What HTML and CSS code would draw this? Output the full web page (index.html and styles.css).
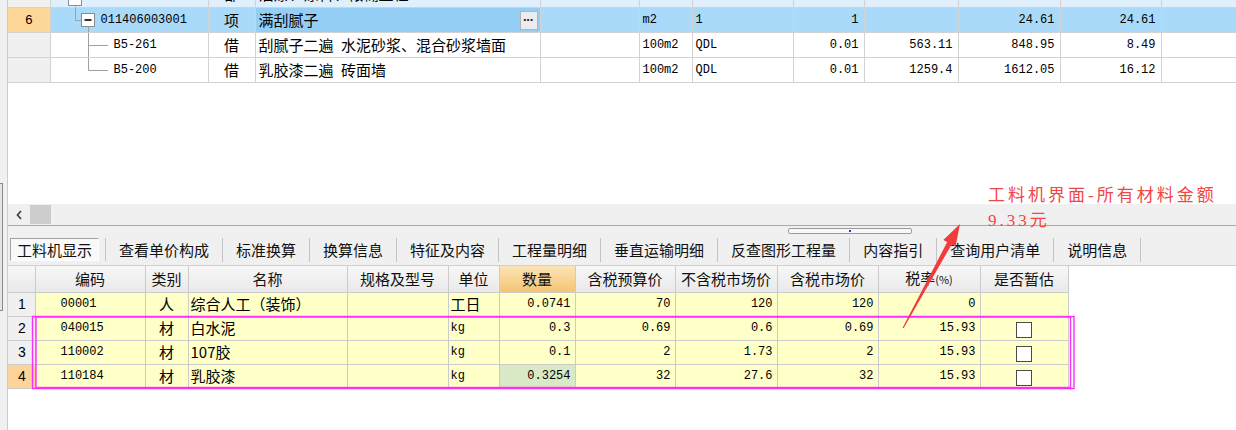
FILE: index.html
```html
<!DOCTYPE html>
<html lang="zh">
<head>
<meta charset="utf-8">
<title>工料机显示</title>
<link rel="stylesheet" href="styles.css">
</head>
<body>
<div class="app">
  <div class="side"><div class="side-grip"></div></div>
  <div class="main">
    <div class="top-grid">
      <table class="grid1">
        <colgroup>
          <col style="width:42px"><col style="width:158px"><col style="width:47px"><col style="width:285px">
          <col style="width:99px"><col style="width:53px"><col style="width:101px"><col style="width:71px">
          <col style="width:94px"><col style="width:102px"><col style="width:101px"><col style="width:75px">
        </colgroup>
        <tr class="r-parent">
          <td class="rn"></td>
          <td class="code"><div class="tree"><svg width="37" height="24" viewBox="0 0 37 24"><rect x="17.5" y="9.5" width="13" height="13" fill="#fff" stroke="#8c8c8c"/><line x1="24.5" y1="22.5" x2="24.5" y2="24" stroke="#a0a0a0"/></svg><span class="m">011406</span></div></td>
          <td class="c">部</td>
          <td>油漆、涂料、裱糊工程</td>
          <td></td><td></td><td></td><td></td><td></td><td></td><td></td><td></td>
        </tr>
        <tr class="r-sel">
          <td class="rn sel">6</td>
          <td class="code"><div class="tree"><svg width="50" height="24" viewBox="0 0 50 24"><line x1="24.5" y1="0" x2="24.5" y2="12.5" stroke="#a0a0a0"/><line x1="24.5" y1="12.5" x2="30" y2="12.5" stroke="#a0a0a0"/><rect x="30.5" y="5.5" width="13" height="13" fill="#fff" stroke="#8c8c8c"/><line x1="33.5" y1="12" x2="40.5" y2="12" stroke="#000" stroke-width="1.6"/><line x1="37.5" y1="18.5" x2="37.5" y2="24" stroke="#a0a0a0"/></svg><span class="m">011406003001</span></div></td>
          <td class="c">项</td>
          <td class="focus"><div class="namecell"><span>满刮腻子</span><span class="ell">···</span></div></td>
          <td></td>
          <td class="m">m2</td>
          <td class="m">1</td>
          <td class="m n">1</td>
          <td></td>
          <td class="m n">24.61</td>
          <td class="m n">24.61</td>
          <td></td>
        </tr>
        <tr class="r-sub">
          <td class="rn"></td>
          <td class="code"><div class="tree"><svg width="63" height="24" viewBox="0 0 63 24"><line x1="37.5" y1="0" x2="37.5" y2="24" stroke="#a0a0a0"/><line x1="37.5" y1="12.5" x2="57" y2="12.5" stroke="#a0a0a0"/></svg><span class="m">B5-261</span></div></td>
          <td class="c">借</td>
          <td>刮腻子二遍&ensp;水泥砂浆、混合砂浆墙面</td>
          <td></td>
          <td class="m">100m2</td>
          <td class="m">QDL</td>
          <td class="m n">0.01</td>
          <td class="m n">563.11</td>
          <td class="m n">848.95</td>
          <td class="m n">8.49</td>
          <td></td>
        </tr>
        <tr class="r-sub">
          <td class="rn"></td>
          <td class="code"><div class="tree"><svg width="63" height="24" viewBox="0 0 63 24"><line x1="37.5" y1="0" x2="37.5" y2="12.5" stroke="#a0a0a0"/><line x1="37.5" y1="12.5" x2="57" y2="12.5" stroke="#a0a0a0"/></svg><span class="m">B5-200</span></div></td>
          <td class="c">借</td>
          <td>乳胶漆二遍&ensp;砖面墙</td>
          <td></td>
          <td class="m">100m2</td>
          <td class="m">QDL</td>
          <td class="m n">0.01</td>
          <td class="m n">1259.4</td>
          <td class="m n">1612.05</td>
          <td class="m n">16.12</td>
          <td></td>
        </tr>
      </table>
    </div>

    <div class="hscroll">
      <svg class="hs-arrow" width="22" height="20" viewBox="0 0 22 20"><polyline points="13,6 9.5,10 13,14" fill="none" stroke="#404040" stroke-width="1.7"/></svg>
      <div class="hs-thumb"></div>
    </div>

    <div class="splitter"><div class="split-handle"><span class="dot"></span></div></div>

    <div class="tabs">
      <div class="tab first"><span class="sunk">工料机显示</span></div>
      <div class="tab">查看单价构成</div>
      <div class="tab">标准换算</div>
      <div class="tab">换算信息</div>
      <div class="tab">特征及内容</div>
      <div class="tab">工程量明细</div>
      <div class="tab">垂直运输明细</div>
      <div class="tab">反查图形工程量</div>
      <div class="tab">内容指引</div>
      <div class="tab">查询用户清单</div>
      <div class="tab">说明信息</div>
    </div>

    <div class="lower">
      <table class="grid2">
        <colgroup>
          <col style="width:27px"><col style="width:110px"><col style="width:43px"><col style="width:159px">
          <col style="width:101px"><col style="width:51px"><col style="width:76px"><col style="width:100px">
          <col style="width:102px"><col style="width:101px"><col style="width:102px"><col style="width:88px">
        </colgroup>
        <tr class="hdr">
          <th></th><th>编码</th><th>类别</th><th>名称</th><th>规格及型号</th><th>单位</th>
          <th class="hq">数量</th><th>含税预算价</th><th>不含税市场价</th><th>含税市场价</th>
          <th>税率<span class="pct">(%)</span></th><th>是否暂估</th>
        </tr>
        <tr>
          <td class="rn2">1</td><td class="m cd">00001</td><td class="c">人</td><td>综合人工（装饰）</td><td></td><td>工日</td>
          <td class="m n">0.0741</td><td class="m n">70</td><td class="m n">120</td><td class="m n">120</td><td class="m n">0</td><td></td>
        </tr>
        <tr>
          <td class="rn2">2</td><td class="m cd">040015</td><td class="c">材</td><td>白水泥</td><td></td><td class="m">kg</td>
          <td class="m n">0.3</td><td class="m n">0.69</td><td class="m n">0.6</td><td class="m n">0.69</td><td class="m n">15.93</td><td class="c"><span class="cb"></span></td>
        </tr>
        <tr>
          <td class="rn2">3</td><td class="m cd">110002</td><td class="c">材</td><td>107胶</td><td></td><td class="m">kg</td>
          <td class="m n">0.1</td><td class="m n">2</td><td class="m n">1.73</td><td class="m n">2</td><td class="m n">15.93</td><td class="c"><span class="cb"></span></td>
        </tr>
        <tr>
          <td class="rn2 sel">4</td><td class="m cd">110184</td><td class="c">材</td><td>乳胶漆</td><td></td><td class="m">kg</td>
          <td class="m n green">0.3254</td><td class="m n">32</td><td class="m n">27.6</td><td class="m n">32</td><td class="m n">15.93</td><td class="c"><span class="cb"></span></td>
        </tr>
      </table>
    </div>
  </div>
</div>

<svg class="marks" width="1236" height="430" viewBox="0 0 1236 430">
  <rect x="32.5" y="316.5" width="1041.5" height="72" fill="none" stroke="#ff2bff" stroke-width="1.4"/>
  <rect x="36" y="317" width="1034.5" height="70.5" fill="none" stroke="#ff2bff" stroke-width="1.4"/>
  <polygon points="902.6,327.8 947.2,242.1 943.3,239.9 960,224 955.5,246.7 951.6,244.5 903.6,328.3" fill="#f23b3b"/>
</svg>
<div class="note">工料机界面-所有材料金额<br>9.33元</div>
</body>
</html>
```

FILE: styles.css
```css
* { box-sizing: border-box; }
html, body { margin: 0; padding: 0; }
body {
  width: 1236px;
  height: 430px;
  overflow: hidden;
  background: #fff;
  font-family: "Noto Sans CJK SC", sans-serif;
  font-size: 15px;
  color: #000;
  position: relative;
}
.app { display: flex; height: 430px; }
.side {
  width: 8px;
  flex: none;
  background: #f0f0f0;
  border-right: 1px solid #cbcbcb;
  display: flex;
  flex-direction: column;
}
.side-grip {
  margin-top: 183px;
  height: 128px;
  width: 3px;
  border: 1px solid #8a8a8a;
  border-left: none;
  background: #e4e4e4;
}
.main { flex: 1; min-width: 0; display: flex; flex-direction: column; }

/* top grid */
.top-grid { height: 204px; flex: none; overflow: hidden; background: #fff; }
table { border-collapse: collapse; table-layout: fixed; }
.grid1 { width: 1228px; margin-top: -18px; }
.grid1 tr { height: 24px; }
.grid1 td {
  border: 1px solid #d2d2d2;
  padding: 0 3px;
  white-space: nowrap;
  overflow: hidden;
  line-height: 20px;
  vertical-align: middle;
}
.grid1 td:first-child { border-left: none; }
.m { font-family: "Liberation Mono", monospace; font-size: 12px; }
.n { text-align: right; }
.grid1 .n { padding-right: 5px; }
.c { text-align: center; }
.grid1 .rn { background: #f0f0f0; text-align: center; font-family: "Liberation Sans", sans-serif; font-size: 13px; }
.grid1 .rn.sel { background: #fdd797; }
.r-parent td { background: #dff0fc; padding-bottom: 3px; }
.r-parent td.rn { background: #f0f0f0; }
.r-sel td { background: #a9daf9; }
.r-sel td.focus { background: #95cef4; }
.grid1 td.code { padding: 0; }
.tree { display: flex; align-items: center; height: 24px; }
.tree svg { flex: none; display: block; }
.namecell { display: flex; align-items: center; justify-content: space-between; }
.ell {
  width: 18px;
  height: 19px;
  margin-right: -1px;
  background: #ececec;
  border: 1px solid #b4b4b4;
  font-family: "Liberation Sans", sans-serif;
  font-size: 13px;
  line-height: 15px;
  letter-spacing: -1px;
  text-indent: -1px;
  text-align: center;
  font-weight: bold;
  color: #222;
}

/* horizontal scrollbar */
.hscroll {
  height: 22px;
  flex: none;
  background: #f0f0f0;
  border-bottom: 1px solid #a8a8a8;
  display: flex;
  align-items: center;
}
.hs-arrow { display: block; flex: none; }
.hs-thumb { width: 21px; height: 19px; background: #cdcdcd; }

/* splitter */
.splitter { height: 8px; flex: none; background: #f0f0f0; padding-top: 2px; }
.split-handle {
  margin-left: 780px;
  width: 124px;
  height: 6px;
  border: 1px solid #9c9c9c;
  border-radius: 2px;
  background: #f8f8f8;
  display: flex;
  justify-content: center;
  align-items: center;
}
.dot { width: 2px; height: 2px; background: #2a3f9a; }

/* tabs */
.tabs {
  height: 31px;
  flex: none;
  background: #f0f0f0;
  display: flex;
  align-items: center;
  padding-left: 2px;
}
.tab {
  padding: 0 13px;
  border-right: 1px solid #c4c4c4;
  line-height: 24px;
  white-space: nowrap;
  color: #111;
}
.tab.first { padding: 0 6px 0 0; }
.sunk {
  display: block;
  padding: 0 6px;
  line-height: 21px;
  background: #f9f9f9;
  border-top: 1px solid #a0a0a0;
  border-left: 1px solid #a0a0a0;
  border-right: 1px solid #fff;
  border-bottom: 1px solid #fff;
}

/* lower grid */
.lower { flex: 1; background: #fff; border-top: 1px solid #d0d0d0; }
.grid2 { width: 1060px; }
.grid2 tr { height: 24px; }
.grid2 tr.hdr { height: 26px; }
.grid2 th, .grid2 td {
  border: 1px solid #cbcbcb;
  padding: 0 2px;
  white-space: nowrap;
  overflow: hidden;
  line-height: 20px;
  vertical-align: middle;
}
.grid2 tr:first-child th { border-top: none; }
.grid2 th:first-child, .grid2 td:first-child { border-left: none; }
.grid2 th {
  font-weight: normal;
  background: linear-gradient(#f7f7f7, #e9e9e9);
  color: #111;
}
.grid2 th.hq { background: linear-gradient(#fce4b6, #f4c474); }
.pct { font-size: 11px; }
.grid2 td { background: #ffffc8; }
.grid2 td.n { padding-right: 4px; }
.grid2 td.cd { padding-left: 25px; }
.grid2 td.rn2 { background: #f0f0f0; padding-left: 10px; font-family: "Liberation Sans", sans-serif; font-size: 14px; }
.grid2 td.rn2.sel { background: #fcd49a; }
.grid2 td.green { background: #d9e9c6; }
.cb {
  display: inline-block;
  width: 16px;
  height: 16px;
  border: 1px solid #4a4a4a;
  background: #fff;
  vertical-align: middle;
}

/* annotations */
.marks { position: absolute; left: 0; top: 0; pointer-events: none; }
.note {
  position: absolute;
  left: 988px;
  top: 183px;
  color: #f24646;
  font-family: "Liberation Serif", "Noto Sans CJK SC", serif;
  font-size: 17px;
  line-height: 25px;
  letter-spacing: 3px;
  white-space: nowrap;
}
```
